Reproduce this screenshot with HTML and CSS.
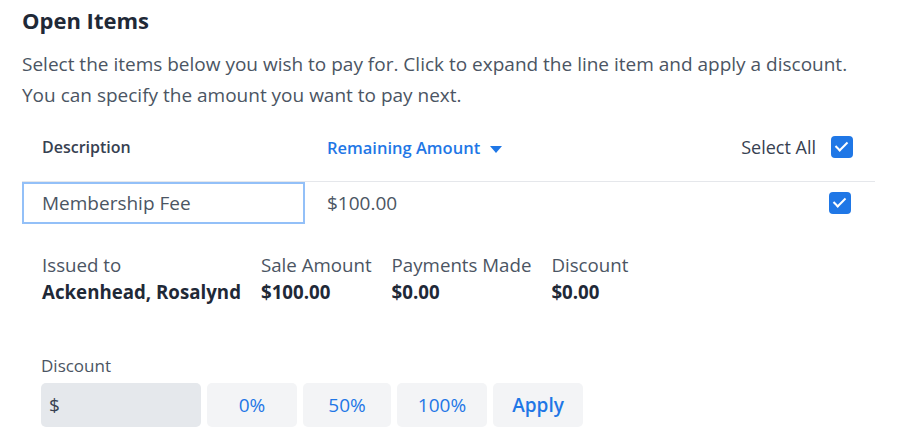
FILE: index.html
```html
<!DOCTYPE html>
<html lang="en">

<head>
    <meta charset="UTF-8">
    <meta name="viewport" content="width=device-width, initial-scale=1.0">
    <title>Open Items</title>
    <link rel="stylesheet" href="styles.css">
</head>

<body>
    <div class="open-items">
        <h1>Open Items</h1>
        <p class="intro">Select the items below you wish to pay for. Click to expand the line item and apply a discount.<br>You can specify the amount you want to pay next.</p>

        <div class="items-table">
            <div class="row head">
                <div class="cell desc">Description</div>
                <div class="cell amount sortable">Remaining Amount <span class="caret"></span></div>
                <div class="cell select">Select All <span class="check"></span></div>
            </div>
            <div class="row item">
                <div class="cell desc active">Membership Fee</div>
                <div class="cell amount">$100.00</div>
                <div class="cell select"><span class="check"></span></div>
            </div>
        </div>

        <div class="details">
            <div class="detail">
                <span class="label">Issued to</span>
                <span class="value">Ackenhead, Rosalynd</span>
            </div>
            <div class="detail">
                <span class="label">Sale Amount</span>
                <span class="value">$100.00</span>
            </div>
            <div class="detail">
                <span class="label">Payments Made</span>
                <span class="value">$0.00</span>
            </div>
            <div class="detail">
                <span class="label">Discount</span>
                <span class="value">$0.00</span>
            </div>
        </div>

        <div class="discount">
            <label for="discountInput">Discount</label>
            <div class="discount-group">
                <div class="money-input">
                    <span>$</span>
                    <input id="discountInput" type="text">
                </div>
                <button>0%</button>
                <button class="narrow">50%</button>
                <button>100%</button>
                <button class="apply">Apply</button>
            </div>
        </div>
    </div>
</body>

</html>
```

FILE: styles.css
```css
body {
    margin: 0;
    background-color: #fff;
}

.open-items {
    font-family: "Open Sans", "Noto Sans", sans-serif;
    color: #4b5563;
    width: 853px;
    padding: 5px 0 0 22px;

    h1 {
        margin: 0;
        font-size: 22px;
        line-height: 30px;
        font-weight: 700;
        color: #1f2937;
    }

    .intro {
        margin: 14px 0 0;
        font-size: 19px;
        line-height: 31px;
    }

    .items-table {
        margin-top: 12px;
    }

    .row {
        display: flex;
        align-items: center;
    }

    .row.head {
        box-sizing: border-box;
        height: 59px;
        padding-bottom: 10px;
        border-bottom: 1px solid #e5e7eb;
        font-size: 16px;
        font-weight: 600;
        color: #374151;
    }

    .row.item {
        height: 42px;
        font-size: 19px;
    }

    .cell {
        padding-left: 20px;
    }

    .cell.desc {
        width: 263px;
    }

    .cell.desc.active {
        box-sizing: border-box;
        width: 283px;
        height: 42px;
        display: flex;
        align-items: center;
        padding-left: 18px;
        border: 2px solid #93c0f8;
        color: #4b5563;
    }

    .cell.amount {
        flex: 1;
        padding-left: 22px;
    }

    .sortable {
        font-size: 16.5px;
        color: #1f77e6;
    }

    .caret {
        display: inline-block;
        margin-left: 6px;
        vertical-align: middle;
        border-left: 6px solid transparent;
        border-right: 6px solid transparent;
        border-top: 7px solid #1f77e6;
    }

    .cell.select {
        display: flex;
        align-items: center;
        gap: 15px;
        padding-right: 22px;
        font-size: 18px;
        font-weight: 400;
    }

    .row.item .cell.select {
        padding-right: 24px;
    }

    .check {
        position: relative;
        width: 22px;
        height: 22px;
        border-radius: 4px;
        background-color: #1f77e6;
    }

    .check::after {
        content: "";
        position: absolute;
        left: 7px;
        top: 3px;
        width: 5px;
        height: 10px;
        border: solid #fff;
        border-width: 0 2px 2px 0;
        transform: rotate(45deg);
    }

    .details {
        display: flex;
        gap: 20px;
        margin-top: 27px;
        padding-left: 20px;
        font-size: 18.7px;
        line-height: 27px;
    }

    .detail {
        display: flex;
        flex-direction: column;
    }

    .detail .value {
        font-weight: 700;
        color: #1f2937;
    }

    .discount {
        margin-top: 50px;
        padding-left: 19px;

        label {
            display: block;
            font-size: 17px;
            line-height: 22px;
            color: #4b5563;
        }
    }

    .discount-group {
        display: flex;
        gap: 6px;
        margin-top: 6px;
    }

    .money-input {
        display: flex;
        align-items: center;
        width: 160px;
        height: 44px;
        padding-left: 8px;
        box-sizing: border-box;
        border-radius: 5px;
        background-color: #e5e8ec;
        font-size: 19px;
        color: #374151;

        input {
            width: 100%;
            border: none;
            background: transparent;
            outline: none;
        }
    }

    button {
        width: 90px;
        height: 44px;
        border: none;
        border-radius: 5px;
        background-color: #f3f4f6;
        color: #1f77e6;
        font-family: inherit;
        font-size: 19px;
        cursor: pointer;
    }

    button.narrow {
        width: 88px;
    }

    button.apply {
        font-size: 19px;
        font-weight: 600;
    }
}
```
